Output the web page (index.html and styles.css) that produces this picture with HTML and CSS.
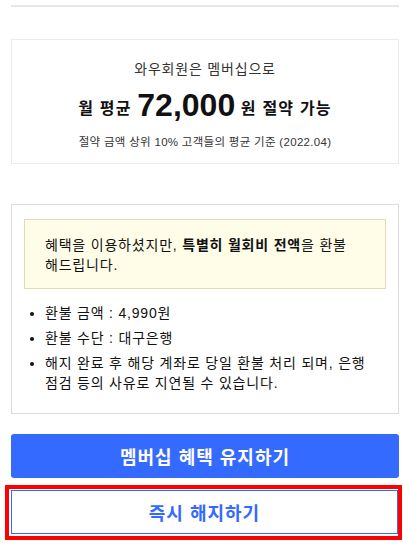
FILE: index.html
```html
<!DOCTYPE html>
<html lang="ko">
<head>
    <meta charset="UTF-8">
    <meta name="viewport" content="width=device-width, initial-scale=1.0">
    <title>멤버십 해지</title>
    <link rel="stylesheet" href="styles.css">
</head>
<body>
    <div class="divider"></div>

    <div class="saving-card">
        <p class="saving-intro">와우회원은 멤버십으로</p>
        <p class="saving-main">월 평균 <span class="saving-amount">72,000</span> 원 절약 가능</p>
        <p class="saving-note">절약 금액 상위 10% 고객들의 평균 기준 (2022.04)</p>
    </div>

    <div class="refund-card">
        <div class="notice">
            혜택을 이용하셨지만, <strong>특별히 월회비 전액</strong>을 환불 해드립니다.
        </div>
        <ul class="refund-list">
            <li>환불 금액 : 4,990원</li>
            <li>환불 수단 : 대구은행</li>
            <li>해지 완료 후 해당 계좌로 당일 환불 처리 되며, 은행 점검 등의 사유로 지연될 수 있습니다.</li>
        </ul>
    </div>

    <button class="btn btn-primary" type="button">멤버십 혜택 유지하기</button>
    <div class="focus-ring">
        <button class="btn btn-outline" type="button">즉시 해지하기</button>
    </div>
</body>
</html>
```

FILE: styles.css
```css
body {
    font-family: "Liberation Sans", "Noto Sans CJK KR", sans-serif;
    color: #111;
    margin: 0;
    padding: 0 4px 0 11px;
    background: #fff;
}
p {
    margin: 0;
}
.divider {
    height: 2px;
    margin-top: 5px;
    background-color: #e6e6ec;
}
.saving-card {
    margin-top: 32px;
    border: 1px solid #ebebeb;
    padding: 19px 0 13px;
    text-align: center;
}
.saving-intro {
    font-size: 14px;
    line-height: 20px;
    letter-spacing: 0.8px;
    color: #333;
}
.saving-main {
    margin-top: 8px;
    font-size: 16px;
    line-height: 36px;
    font-weight: bold;
    letter-spacing: 1.2px;
}
.saving-amount {
    font-size: 32px;
    letter-spacing: 0;
    vertical-align: -2px;
}
.saving-note {
    margin-top: 7px;
    font-size: 11.5px;
    line-height: 16px;
    letter-spacing: 0.3px;
    color: #333;
}
.refund-card {
    margin-top: 40px;
    border: 1px solid #dcdcdc;
    padding: 14px 12px 20px;
    font-size: 14px;
    line-height: 20px;
    letter-spacing: 0.8px;
    word-break: keep-all;
}
.notice {
    border: 1px solid #e0dcb4;
    background-color: #fffde8;
    padding: 15px 20px 13px;
}
.refund-list {
    margin: 14px 0 0;
    padding-left: 21px;
}
.refund-list li + li {
    margin-top: 5px;
}
.btn {
    display: block;
    width: 100%;
    height: 44px;
    font-family: inherit;
    font-size: 18px;
    font-weight: bold;
    letter-spacing: 1px;
    border-radius: 3px;
    cursor: pointer;
}
.btn-primary {
    margin-top: 20px;
    border: none;
    background-color: #346aff;
    color: #fff;
}
.btn-outline {
    border: 1px solid #346aff;
    border-radius: 0;
    background-color: #fff;
    color: #346aff;
}
.focus-ring {
    margin: 7px -3px 0 -6px;
    border: 4px solid #ff0000;
    padding: 1px 0 2px 2px;
}
```
